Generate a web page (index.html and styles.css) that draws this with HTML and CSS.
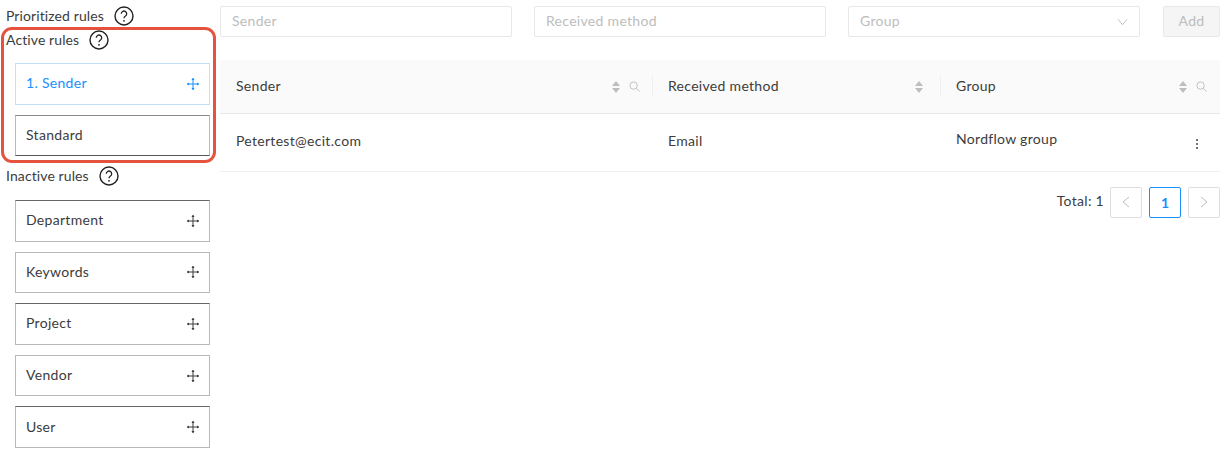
FILE: index.html
```html
<!DOCTYPE html>
<html lang="en">
<head>
    <meta charset="UTF-8">
    <meta name="viewport" content="width=device-width, initial-scale=1.0">
    <title>Prioritized rules</title>
    <link rel="stylesheet" href="styles.css">
</head>
<body>
    <svg class="sprites" width="0" height="0" aria-hidden="true">
        <symbol id="help" viewBox="0 0 20 20">
            <circle cx="10" cy="10" r="9" fill="none" stroke="currentColor" stroke-width="1.4"/>
            <path d="M7.3 7.8a2.7 2.7 0 1 1 4.2 2.2c-1 .7-1.5 1.1-1.5 2.3" fill="none" stroke="currentColor" stroke-width="1.3"/>
            <circle cx="10" cy="14.8" r=".9" fill="currentColor"/>
        </symbol>
        <symbol id="move" viewBox="0 0 12 12">
            <path d="M6 0v12M0 6h12" fill="none" stroke="currentColor" stroke-width="1"/>
            <path d="M6 0l1.6 2H4.400zM6 12l1.600-2H4.400zM0 6l2-1.600v3.200zM12 6l-2-1.600v3.200z" fill="currentColor"/>
        </symbol>
        <symbol id="sort" viewBox="0 0 8 12">
            <path d="M4 0l4 5H0zM4 12l4-5H0z" fill="currentColor"/>
        </symbol>
        <symbol id="search" viewBox="0 0 12 12">
            <circle cx="5" cy="5" r="4" fill="none" stroke="currentColor" stroke-width="1"/>
            <path d="M8 8l3.500 3.500" fill="none" stroke="currentColor" stroke-width="1"/>
        </symbol>
    </svg>

    <div class="page">
        <aside class="rules">
            <div class="rules-title top"><span>Prioritized rules</span> <svg class="help"><use href="#help"/></svg></div>

            <section class="active-rules">
                <div class="rules-title"><span>Active rules</span> <svg class="help"><use href="#help"/></svg></div>
                <div class="rule rule-selected"><span>1. Sender</span> <svg class="move"><use href="#move"/></svg></div>
                <div class="rule rule-dark rule-last"><span>Standard</span></div>
                <div class="highlight"></div>
            </section>

            <div class="rules-title inactive"><span>Inactive rules</span> <svg class="help"><use href="#help"/></svg></div>
            <div class="rule rule-dark-top"><span>Department</span> <svg class="move"><use href="#move"/></svg></div>
            <div class="rule"><span>Keywords</span> <svg class="move"><use href="#move"/></svg></div>
            <div class="rule rule-dark-top"><span>Project</span> <svg class="move"><use href="#move"/></svg></div>
            <div class="rule"><span>Vendor</span> <svg class="move"><use href="#move"/></svg></div>
            <div class="rule rule-dark-top"><span>User</span> <svg class="move"><use href="#move"/></svg></div>
        </aside>

        <main class="content">
            <div class="filters">
                <input class="field" type="text" placeholder="Sender">
                <input class="field" type="text" placeholder="Received method">
                <div class="field select">
                    <span>Group</span>
                    <svg class="chevron" viewBox="0 0 12 8"><path d="M1 1l5 6 5-6" fill="none" stroke="currentColor" stroke-width="1"/></svg>
                </div>
                <button class="add" disabled>Add</button>
            </div>

            <table class="grid">
                <thead>
                    <tr>
                        <th class="col-sender">
                            <div class="th-inner">Sender
                                <span class="th-icons">
                                    <svg class="sort"><use href="#sort"/></svg>
                                    <svg class="search"><use href="#search"/></svg>
                                </span>
                            </div>
                        </th>
                        <th class="col-method">
                            <div class="th-inner">Received method
                                <span class="th-icons">
                                    <svg class="sort sort-only"><use href="#sort"/></svg>
                                </span>
                            </div>
                        </th>
                        <th>
                            <div class="th-inner">Group
                                <span class="th-icons">
                                    <svg class="sort"><use href="#sort"/></svg>
                                    <svg class="search"><use href="#search"/></svg>
                                </span>
                            </div>
                        </th>
                    </tr>
                </thead>
                <tbody>
                    <tr>
                        <td class="cell-sender">Petertest@ecit.com</td>
                        <td>Email</td>
                        <td>
                            <div class="group-cell">
                                <span class="group-name">Nordflow group</span>
                                <span class="kebab"><i></i><i></i><i></i></span>
                            </div>
                        </td>
                    </tr>
                </tbody>
            </table>

            <div class="pager">
                <span class="total">Total: 1</span>
                <button class="page-btn"><svg viewBox="0 0 8 12"><path d="M7 1L1 6l6 5" fill="none" stroke="currentColor"/></svg></button>
                <button class="page-btn current">1</button>
                <button class="page-btn"><svg viewBox="0 0 8 12"><path d="M1 1l6 5-6 5" fill="none" stroke="currentColor"/></svg></button>
            </div>
        </main>
    </div>
</body>
</html>
```

FILE: styles.css
```css
:root {
    --text: #3c3c3c;
    --muted: #bdbdbd;
    --line: #e8e8e8;
    --blue: #1890ff;
}

* {
    box-sizing: border-box;
}

body {
    margin: 0;
    background: #fff;
    color: var(--text);
    font-family: "Lato", "Noto Sans", sans-serif;
    font-size: 14px;
    letter-spacing: 0.3px;
}

.sprites {
    position: absolute;
}

.page {
    display: flex;
    width: 1224px;
}

.rules {
    flex: 0 0 220px;
    padding: 6px 10px 0 6px;
}

.rules-title {
    display: flex;
    align-items: center;
    gap: 10px;
    height: 20px;
    letter-spacing: 0.1px;
}

.rules-title span {
    margin-bottom: 2px;
}

.top {
    margin-bottom: 4px;
}

.inactive {
    margin: 9px 0 13.8px;
}

.help {
    width: 20px;
    height: 20px;
    color: #222;
}

.active-rules {
    position: relative;
    padding-bottom: 1px;
}

.active-rules .rules-title {
    margin-bottom: 13px;
}

.rule {
    display: flex;
    align-items: center;
    justify-content: space-between;
    width: 195px;
    height: 41.6px;
    margin: 0 0 10px 9px;
    padding: 0 10px;
    border: 1px solid #b8b8b8;
}

.rule span {
    margin-bottom: 2px;
}

.rule-last {
    margin-bottom: 0;
}

.rule-selected {
    border-color: #bfe0fb;
    color: var(--blue);
}

.rule-dark {
    border-top-color: #8a8a8a;
    border-bottom-color: #555;
}

.rule-dark-top {
    border-top-color: #666;
}

.move {
    width: 12px;
    height: 12px;
}

.highlight {
    position: absolute;
    left: -5px;
    top: -3px;
    width: 215px;
    height: 136px;
    border: 3px solid #e5533d;
    border-radius: 11px;
    pointer-events: none;
}

.content {
    flex: 0 0 1000px;
    padding-top: 6px;
}

.filters {
    display: flex;
    gap: 22px;
    height: 31px;
}

.field {
    width: 292px;
    height: 31px;
    padding: 0 11px 2px;
    border: 1px solid var(--line);
    border-radius: 2px;
    font: inherit;
    letter-spacing: inherit;
}

.field::placeholder {
    color: var(--muted);
}

.select {
    display: flex;
    align-items: center;
    justify-content: space-between;
    color: var(--muted);
}

.chevron {
    width: 11px;
    height: 8px;
    margin-top: 2px;
}

.add {
    width: 57px;
    height: 31px;
    margin-left: 1px;
    padding: 0 0 2px;
    border: 1px solid var(--line);
    border-radius: 2px;
    background: #f5f5f5;
    color: var(--muted);
    font: inherit;
    letter-spacing: inherit;
}

.grid {
    width: 1000px;
    margin-top: 23px;
    border-collapse: collapse;
    table-layout: fixed;
}

.col-sender {
    width: 433px;
}

.col-method {
    width: 288px;
}

th {
    height: 53px;
    padding: 0;
    background: #fafafa;
    border-bottom: 1px solid var(--line);
    font-weight: 400;
    text-align: left;
}

.th-inner {
    display: flex;
    align-items: center;
    justify-content: space-between;
    height: 22px;
    padding: 0 12px 2px 15px;
    border-right: 1px solid #f0f0f0;
}

.col-sender .th-inner {
    padding-left: 16px;
}

th:last-child .th-inner {
    padding-right: 13px;
    border-right: 0;
}

.th-icons {
    display: flex;
    align-items: center;
    gap: 9px;
    margin-top: 3px;
    color: var(--muted);
}

.sort {
    width: 8px;
    height: 12px;
}

.sort-only {
    margin-right: 5px;
}

.search {
    width: 11px;
    height: 11px;
}

td {
    height: 58px;
    padding: 0 7px 4px 15px;
    border-bottom: 1px solid #f0f0f0;
}

td.cell-sender {
    padding-left: 16px;
}

.group-cell {
    display: flex;
    align-items: center;
    justify-content: space-between;
    padding-right: 15px;
}

.group-name {
    margin-bottom: 4px;
}

.kebab {
    display: flex;
    flex-direction: column;
    gap: 2px;
    width: 2px;
    margin-top: 8px;
}

.kebab i {
    width: 2px;
    height: 2px;
    border-radius: 50%;
    background: #444;
}

.pager {
    display: flex;
    align-items: center;
    justify-content: flex-end;
    gap: 7px;
    margin-top: 15px;
}

.total {
    margin-right: -1px;
    padding-bottom: 4px;
}

.page-btn {
    display: flex;
    align-items: center;
    justify-content: center;
    width: 32px;
    height: 31px;
    padding: 0;
    border: 1px solid #dedede;
    border-radius: 2px;
    background: #fff;
    color: var(--muted);
    font: inherit;
    font-weight: 700;
}

.page-btn svg {
    width: 8px;
    height: 12px;
}

.current {
    border-color: var(--blue);
    color: var(--blue);
}
```
